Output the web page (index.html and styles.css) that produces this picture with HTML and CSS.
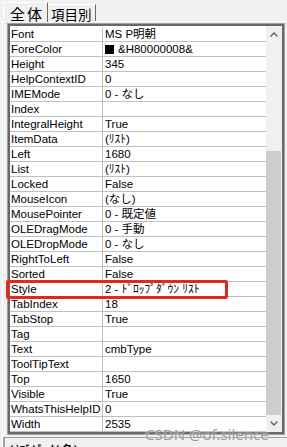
FILE: index.html
```html
<!DOCTYPE html>
<html lang="ja">
<head>
    <meta charset="UTF-8">
    <title>Properties</title>
    <link rel="stylesheet" href="styles.css">
</head>
<body>
    <div class="tabs">
        <div class="tab tab-active">全体</div>
        <div class="tab tab-other">項目別</div>
    </div>

    <div class="panel">
        <div class="grid">
            <div class="grid-in">
                <div class="rows">
                    <div class="row"><div class="name">Font</div><div class="value">MS P明朝</div></div>
                    <div class="row"><div class="name">ForeColor</div><div class="value"><span class="swatch"></span>&amp;H80000008&amp;</div></div>
                    <div class="row"><div class="name">Height</div><div class="value">345</div></div>
                    <div class="row"><div class="name">HelpContextID</div><div class="value">0</div></div>
                    <div class="row"><div class="name">IMEMode</div><div class="value">0 - なし</div></div>
                    <div class="row"><div class="name">Index</div><div class="value"></div></div>
                    <div class="row"><div class="name">IntegralHeight</div><div class="value">True</div></div>
                    <div class="row"><div class="name">ItemData</div><div class="value">(ﾘｽﾄ)</div></div>
                    <div class="row"><div class="name">Left</div><div class="value">1680</div></div>
                    <div class="row"><div class="name">List</div><div class="value">(ﾘｽﾄ)</div></div>
                    <div class="row"><div class="name">Locked</div><div class="value">False</div></div>
                    <div class="row"><div class="name">MouseIcon</div><div class="value">(なし)</div></div>
                    <div class="row"><div class="name">MousePointer</div><div class="value">0 - 既定値</div></div>
                    <div class="row"><div class="name">OLEDragMode</div><div class="value">0 - 手動</div></div>
                    <div class="row"><div class="name">OLEDropMode</div><div class="value">0 - なし</div></div>
                    <div class="row"><div class="name">RightToLeft</div><div class="value">False</div></div>
                    <div class="row"><div class="name">Sorted</div><div class="value">False</div></div>
                    <div class="row row-marked"><div class="name">Style</div><div class="value">2 - ﾄﾞﾛｯﾌﾟﾀﾞｳﾝ ﾘｽﾄ</div><div class="mark"></div></div>
                    <div class="row"><div class="name">TabIndex</div><div class="value">18</div></div>
                    <div class="row"><div class="name">TabStop</div><div class="value">True</div></div>
                    <div class="row"><div class="name">Tag</div><div class="value"></div></div>
                    <div class="row"><div class="name">Text</div><div class="value">cmbType</div></div>
                    <div class="row"><div class="name">ToolTipText</div><div class="value"></div></div>
                    <div class="row"><div class="name">Top</div><div class="value">1650</div></div>
                    <div class="row"><div class="name">Visible</div><div class="value">True</div></div>
                    <div class="row"><div class="name">WhatsThisHelpID</div><div class="value">0</div></div>
                    <div class="row"><div class="name">Width</div><div class="value">2535</div></div>
                </div>

                <div class="scrollbar">
                    <div class="arrow">
                        <svg width="8" height="5" viewBox="0 0 8 5"><path d="M0.5 4.5 L4 1 L7.5 4.5" fill="none" stroke="#606060" stroke-width="1.4"/></svg>
                    </div>
                    <div class="track"><div class="thumb"></div></div>
                    <div class="arrow">
                        <svg width="8" height="5" viewBox="0 0 8 5"><path d="M0.5 0.5 L4 4 L7.5 0.5" fill="none" stroke="#606060" stroke-width="1.4"/></svg>
                    </div>
                </div>
            </div>
        </div>

        <div class="desc">(ｵﾌﾞｼﾞｪｸﾄ名)</div>
    </div>

    <div class="watermark">CSDN @of.silence</div>
</body>
</html>
```

FILE: styles.css
```css
body {
    margin: 0;
    width: 287px;
    height: 447px;
    overflow: hidden;
    position: relative;
    background: #f0f0f0;
    font-family: "Liberation Sans", "Noto Sans CJK JP", sans-serif;
    font-size: 11.5px;
    color: #000;
}
.tabs {
    display: flex;
    align-items: flex-end;
    height: 21px;
    padding-left: 3px;
}
.tab {
    box-sizing: border-box;
    font-family: "Noto Sans CJK JP", sans-serif;
    line-height: 16px;
    white-space: nowrap;
    border: 1px solid #fff;
    border-right-color: #696969;
    border-bottom: none;
    background: #f0f0f0;
}
.tab-active {
    position: relative;
    z-index: 1;
    width: 45px;
    height: 20px;
    margin-bottom: -1px;
    padding: 3px 0 0 6px;
    font-size: 15px;
    letter-spacing: 2px;
}
.tab-other {
    width: 48px;
    height: 17px;
    padding: 1px 0 0 3px;
    border-left: none;
    font-size: 13.5px;
}
.panel {
    border-top: 1px solid #fff;
    border-left: 1px solid #fff;
    margin-left: 2px;
    padding: 1px 0 0 4px;
}
.grid {
    width: 278px;
    box-sizing: border-box;
    border: 1px solid #a0a0a0;
}
.grid-in {
    display: flex;
    border: 2px solid #696969;
    background: #fff;
}
.rows {
    width: 256px;
    padding-top: 1px;
}
.row {
    display: flex;
    height: 14px;
    line-height: 14px;
    border-bottom: 1px solid #c0c0c0;
    white-space: nowrap;
}
.name {
    flex: none;
    width: 93px;
    padding-left: 1px;
    box-sizing: border-box;
    border-right: 1px solid #c0c0c0;
}
.value {
    padding-left: 2px;
    display: flex;
    align-items: center;
}
.swatch {
    display: inline-block;
    width: 9px;
    height: 9px;
    background: #000;
    margin-right: 4px;
}
.row-marked {
    position: relative;
}
.mark {
    position: absolute;
    left: -4px;
    top: -2px;
    width: 222px;
    height: 19px;
    box-sizing: border-box;
    border: 3px solid #e8261c;
    border-radius: 2px;
}
.scrollbar {
    width: 16px;
    display: flex;
    flex-direction: column;
    background: #f0f0f0;
}
.arrow {
    height: 17px;
    display: flex;
    align-items: center;
    justify-content: center;
}
.track {
    flex: 1;
}
.thumb {
    margin-top: 108px;
    width: 15px;
    height: 264px;
    background: #cdcdcd;
}
.desc {
    margin: 2px 0 0 -4px;
    height: 20px;
    border-top: 1px solid #a0a0a0;
    border-left: 2px solid #a0a0a0;
    padding: 3px 0 0 4px;
    font-family: "Noto Sans CJK JP", sans-serif;
    font-weight: bold;
    font-size: 12px;
}
.watermark {
    position: absolute;
    left: 145px;
    top: 424px;
    font-family: "Noto Sans", sans-serif;
    font-size: 15px;
    color: rgba(120, 120, 120, 0.75);
    text-shadow: 0 0 2px #fff;
}
```
